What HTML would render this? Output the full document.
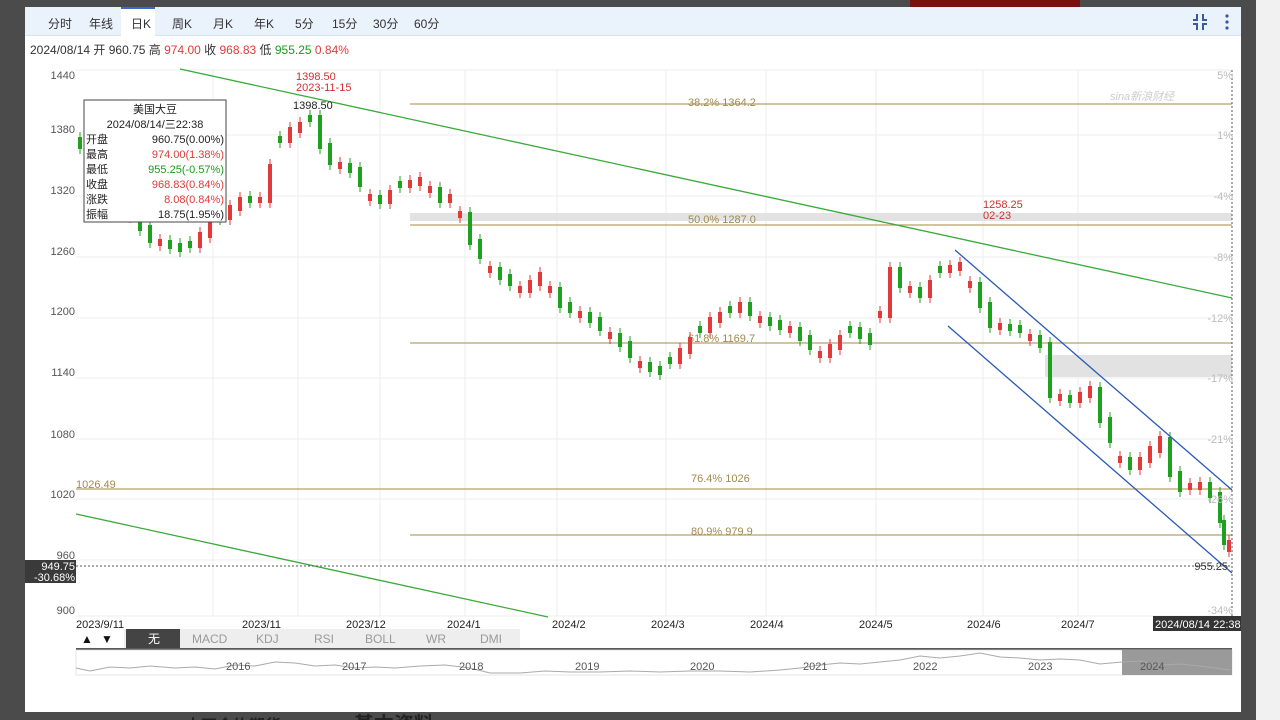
<!DOCTYPE html>
<html><head><meta charset="utf-8"><style>
html,body{margin:0;width:1280px;height:720px;overflow:hidden}
body{background:#4b4b4b;font-family:"Liberation Sans","Noto Sans CJK SC",sans-serif;position:relative}
#sb{position:absolute;left:1256px;top:0;width:24px;height:720px;background:#f1f1f1}
#thumb{position:absolute;left:1270px;top:100px;width:8px;height:610px;background:#c1c1c1;border-radius:4px}
#panel{position:absolute;left:25px;top:7px;width:1216px;height:705px;background:#fff}
#tb{position:absolute;left:0;top:0;width:1216px;height:28px;background:#eaf2fc;border-bottom:1px solid #d6e2f0}
#tb span{position:absolute;top:8px;font-size:12px;color:#333}
#info{position:absolute;left:5px;top:34px;font-size:12px;color:#333}
.r{color:#e03a3a}.g{color:#1a9a1a}
svg text{font-family:"Liberation Sans","Noto Sans CJK SC",sans-serif}
#below{position:absolute;left:185px;top:708px;color:#222;font-size:16px;font-weight:bold;white-space:nowrap}
</style></head><body>
<div id="sb"><div id="thumb"></div></div>
<div style="position:absolute;left:910px;top:0;width:170px;height:7px;background:#7a1010"></div>
<div id="panel">
<div id="tb">
<div style="position:absolute;left:96px;top:0;width:34px;height:29px;background:#fff;border-top:2px solid #3a6ad0;box-sizing:border-box"></div>
<span style="left:23px">分时</span><span style="left:64px">年线</span><span style="left:106px">日K</span><span style="left:147px">周K</span><span style="left:188px">月K</span><span style="left:229px">年K</span><span style="left:270px">5分</span><span style="left:307px">15分</span><span style="left:348px">30分</span><span style="left:389px">60分</span>
<svg style="position:absolute;left:1166px;top:5px" width="50" height="20"><path d="M4 2v6H0M10 2v6h4M4 18v-6H0M10 18v-6h4" stroke="#3a5aa0" stroke-width="2" fill="none" transform="translate(2,0)"/><circle cx="36" cy="4" r="1.6" fill="#3a5aa0"/><circle cx="36" cy="10" r="1.6" fill="#3a5aa0"/><circle cx="36" cy="16" r="1.6" fill="#3a5aa0"/></svg>
</div>
<div id="info">2024/08/14 开 960.75 高 <span class="r">974.00</span> 收 <span class="r">968.83</span> 低 <span class="g">955.25</span> <span class="r">0.84%</span></div>
</div>
<svg style="position:absolute;left:0;top:0" width="1256" height="720">
<defs>
<path id="G" d="M80 137V149M90 143V178M110 182V198M120 192V208M140 212V231M150 225V243M170 240V249M180 243V252M190 241V248M220 213V220M250 196V203M280 136V143M310 115V122M320 115V149M330 143V165M350 163V173M360 167V187M380 195V204M400 181V188M440 187V203M470 212V245M480 239V259M500 267V280M510 274V286M560 287V308M570 302V313M590 312V323M600 317V331M620 333V347M630 341V358M650 362V372M660 366V375M670 357V364M700 326V333M730 306V313M750 302V316M770 317V326M780 320V330M800 327V341M810 335V350M850 326V333M860 327V339M870 333V345M900 267V288M920 287V298M940 266V273M980 282V308M990 302V328M1010 324V331M1020 325V333M1040 335V348M1050 342V398M1070 395V403M1100 387V423M1110 417V443M1130 457V470M1170 437V477M1180 471V492M1210 482V498M1220 492V523M1224 520V545"/>
<path id="R" d="M100 181V188M130 211V218M160 239V246M200 232V248M210 222V238M230 205V220M240 197V211M260 197V203M270 164V203M290 127V143M300 122V133M340 162V169M370 194V201M390 190V204M410 180V188M420 177V186M430 186V193M450 194V203M460 211V218M490 266V273M520 286V293M530 280V293M540 272V286M550 286V293M580 311V318M610 332V339M640 361V368M680 348V364M690 337V354M710 317V333M720 312V323M740 302V313M760 316V323M790 326V333M820 351V358M830 344V358M840 335V350M880 311V318M890 267V318M910 286V293M930 280V298M950 265V273M960 262V271M970 281V288M1000 323V330M1030 334V341M1060 394V401M1080 392V403M1090 386V398M1120 456V463M1140 457V470M1150 446V463M1160 436V453M1190 483V490M1200 482V490M1229 540V552"/>
</defs>
<g stroke="#eeeeee" stroke-width="1">
<line x1="76" y1="135" x2="1232" y2="135"/><line x1="76" y1="196" x2="1232" y2="196"/><line x1="76" y1="257" x2="1232" y2="257"/><line x1="76" y1="318" x2="1232" y2="318"/><line x1="76" y1="378" x2="1232" y2="378"/><line x1="76" y1="439" x2="1232" y2="439"/><line x1="76" y1="499" x2="1232" y2="499"/><line x1="76" y1="560" x2="1232" y2="560"/><line x1="76" y1="70" x2="1232" y2="70"/><line x1="76" y1="616" x2="1232" y2="616"/>
<line x1="213" y1="70" x2="213" y2="616"/><line x1="298" y1="70" x2="298" y2="616"/><line x1="380" y1="70" x2="380" y2="616"/><line x1="465" y1="70" x2="465" y2="616"/><line x1="557" y1="70" x2="557" y2="616"/><line x1="666" y1="70" x2="666" y2="616"/><line x1="766" y1="70" x2="766" y2="616"/><line x1="876" y1="70" x2="876" y2="616"/><line x1="983" y1="70" x2="983" y2="616"/><line x1="1078" y1="70" x2="1078" y2="616"/>
</g>
<rect x="410" y="213" width="822" height="8" fill="#e2e2e2"/>
<rect x="1045" y="355" width="187" height="22" fill="#e2e2e2"/>
<g stroke="#b8a067" stroke-width="1.2">
<line x1="410" y1="104" x2="1232" y2="104"/><line x1="410" y1="225" x2="1232" y2="225"/><line x1="410" y1="343" x2="1232" y2="343"/><line x1="76" y1="489" x2="1232" y2="489"/><line x1="410" y1="535" x2="1232" y2="535"/>
</g>
<g font-size="11" fill="#a08a50">
<text x="688" y="106">38.2% 1364.2</text><text x="688" y="223">50.0% 1287.0</text><text x="688" y="342">61.8% 1169.7</text><text x="691" y="482">76.4% 1026</text><text x="691" y="535">80.9% 979.9</text><text x="76" y="488">1026.49</text>
</g>
<text x="1110" y="100" font-size="11" fill="#ccc" font-style="italic">sina新浪财经</text>
<g stroke="#1fa01f" fill="none" stroke-width="1"><use href="#G" transform="translate(0,-5)"/><use href="#G" transform="translate(0,5)"/></g>
<g stroke="#1fa01f" fill="none" stroke-width="4"><use href="#G"/></g>
<g stroke="#e03a3a" fill="none" stroke-width="1"><use href="#R" transform="translate(0,-5)"/><use href="#R" transform="translate(0,5)"/></g>
<g stroke="#e03a3a" fill="none" stroke-width="4"><use href="#R"/></g>
<g stroke="#3aaa3a" stroke-width="1.3"><line x1="180" y1="69" x2="1232" y2="298"/><line x1="76" y1="514" x2="548" y2="617"/></g>
<g stroke="#2a5ab8" stroke-width="1.3"><line x1="955" y1="250" x2="1232" y2="490"/><line x1="948" y1="326" x2="1232" y2="573"/></g>
<line x1="76" y1="566" x2="1232" y2="566" stroke="#555" stroke-dasharray="2,2"/>
<line x1="1232" y1="70" x2="1232" y2="616" stroke="#555" stroke-dasharray="2,2"/>
<g font-size="11" fill="#555" text-anchor="end">
<text x="75" y="79">1440</text><text x="75" y="133">1380</text><text x="75" y="194">1320</text><text x="75" y="255">1260</text><text x="75" y="315">1200</text><text x="75" y="376">1140</text><text x="75" y="438">1080</text><text x="75" y="498">1020</text><text x="75" y="559">960</text><text x="75" y="614">900</text>
</g>
<g font-size="11" fill="#bbb" text-anchor="end">
<text x="1233" y="79">5%</text><text x="1233" y="139">1%</text><text x="1233" y="200">-4%</text><text x="1233" y="261">-8%</text><text x="1233" y="322">-12%</text><text x="1233" y="382">-17%</text><text x="1233" y="443">-21%</text><text x="1233" y="503">-26%</text><text x="1233" y="614">-34%</text>
</g>
<rect x="25" y="560" width="51" height="23" fill="#3a3a3a"/>
<text x="75" y="570" font-size="11" fill="#fff" text-anchor="end">949.75</text><text x="75" y="581" font-size="11" fill="#fff" text-anchor="end">-30.68%</text>
<text x="1228" y="570" font-size="11" fill="#333" text-anchor="end">955.25</text>
<g font-size="11" fill="#d03030"><text x="296" y="80">1398.50</text><text x="296" y="91">2023-11-15</text><text x="983" y="208">1258.25</text><text x="983" y="219">02-23</text></g>
<text x="293" y="109" font-size="11" fill="#222">1398.50</text>
<g font-size="11" fill="#222">
<text x="76" y="628">2023/9/11</text><text x="242" y="628">2023/11</text><text x="346" y="628">2023/12</text><text x="447" y="628">2024/1</text><text x="552" y="628">2024/2</text><text x="651" y="628">2024/3</text><text x="750" y="628">2024/4</text><text x="859" y="628">2024/5</text><text x="967" y="628">2024/6</text><text x="1061" y="628">2024/7</text>
</g>
<rect x="1153" y="616" width="88" height="15" fill="#333"/><text x="1155" y="628" font-size="11" fill="#fff">2024/08/14 22:38</text>
<g font-size="12">
<rect x="76" y="629" width="444" height="19" fill="#eeeeee"/>
<rect x="76" y="629" width="48" height="19" fill="#fff"/>
<text x="81" y="643" fill="#111">▲</text><text x="101" y="643" fill="#111">▼</text>
<rect x="126" y="629" width="54" height="19" fill="#444"/>
<text x="148" y="643" fill="#fff">无</text><text x="192" y="643" fill="#999">MACD</text><text x="256" y="643" fill="#999">KDJ</text><text x="314" y="643" fill="#999">RSI</text><text x="365" y="643" fill="#999">BOLL</text><text x="426" y="643" fill="#999">WR</text><text x="480" y="643" fill="#999">DMI</text>
</g>
<line x1="76" y1="649" x2="1232" y2="649" stroke="#222" stroke-width="1.5"/>
<rect x="76" y="650" width="1156" height="25" fill="#fff" stroke="#e5e5e5"/>
<rect x="1122" y="650" width="110" height="25" fill="#9a9a9a"/>
<path d="M76 668L90 671L110 667L130 668L150 666L175 668L195 667L215 669L235 665L255 666L275 662L295 663L315 666L335 665L355 668L375 667L395 668L420 666L445 665L470 668L490 673L520 673L545 671L570 672L600 672L630 671L660 672L690 671L720 671L750 672L780 670L800 668L820 665L840 663L860 664L880 662L900 660L920 656L940 658L960 656L980 653L1000 657L1020 658L1040 660L1060 659L1080 660L1100 664L1122 662L1140 661L1160 665L1180 664L1200 666L1230 670" stroke="#aaa" fill="none"/>
<g font-size="11" fill="#555"><text x="226" y="670">2016</text><text x="342" y="670">2017</text><text x="459" y="670">2018</text><text x="575" y="670">2019</text><text x="690" y="670">2020</text><text x="803" y="670">2021</text><text x="913" y="670">2022</text><text x="1028" y="670">2023</text><text x="1140" y="670">2024</text></g>
<rect x="84" y="100" width="142" height="122" fill="#fff" stroke="#444"/>
<g font-size="11" fill="#222">
<text x="155" y="113" text-anchor="middle">美国大豆</text><text x="155" y="128" text-anchor="middle">2024/08/14/三22:38</text>
<text x="86" y="143">开盘</text><text x="86" y="158">最高</text><text x="86" y="173">最低</text><text x="86" y="188">收盘</text><text x="86" y="203">涨跌</text><text x="86" y="218">振幅</text>
<g text-anchor="end"><text x="224" y="143">960.75(0.00%)</text><text x="224" y="158" fill="#e03a3a">974.00(1.38%)</text><text x="224" y="173" fill="#1a9a1a">955.25(-0.57%)</text><text x="224" y="188" fill="#e03a3a">968.83(0.84%)</text><text x="224" y="203" fill="#e03a3a">8.08(0.84%)</text><text x="224" y="218">18.75(1.95%)</text></g>
</g>
</svg>
<div id="below">十万合约期货 <span style="font-size:12px;font-weight:normal;color:#666;margin:0 20px">更多</span> <span style="font-size:20px">基本资料</span></div>
</body></html>
